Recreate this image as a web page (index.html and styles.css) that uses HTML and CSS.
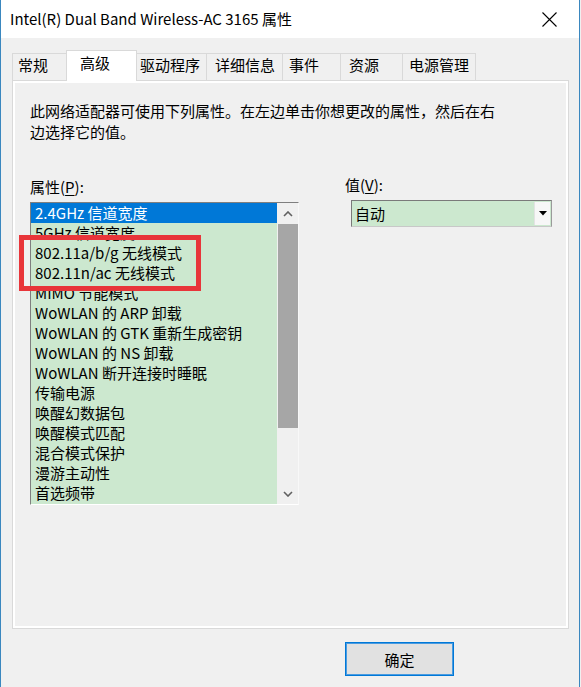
FILE: index.html
```html
<!DOCTYPE html>
<html lang="zh-CN">
<head>
<meta charset="utf-8">
<title>属性</title>
<link rel="stylesheet" href="styles.css">
</head>
<body>
<div class="window">
  <div class="titlebar">
    <span class="title">Intel(R) Dual Band Wireless-AC 3165 属性</span>
    <svg class="close" width="15" height="15" viewBox="0 0 15 15"><path d="M0.5 0.5 L14.5 14.5 M14.5 0.5 L0.5 14.5" stroke="#000" stroke-width="1.1" fill="none"/></svg>
  </div>
  <div class="main">
    <div class="tabs">
      <div class="tab t-general">常规</div>
      <div class="tab active t-adv">高级</div>
      <div class="tab t-driver">驱动程序</div>
      <div class="tab t-detail">详细信息</div>
      <div class="tab t-event">事件</div>
      <div class="tab t-res">资源</div>
      <div class="tab t-power">电源管理</div>
    </div>
    <div class="panel">
      <p class="desc">此网络适配器可使用下列属性。在左边单击你想更改的属性，然后在右边选择它的值。</p>
      <div class="cols">
        <div class="col-left">
          <div class="label">属性(<u>P</u>):</div>
          <div class="listbox">
            <div class="rows">
              <div class="row selected">2.4GHz 信道宽度</div>
              <div class="row">5GHz 信道宽度</div>
              <div class="row">802.11a/b/g 无线模式</div>
              <div class="row">802.11n/ac 无线模式</div>
              <div class="row">MIMO 节能模式</div>
              <div class="row">WoWLAN 的 ARP 卸载</div>
              <div class="row">WoWLAN 的 GTK 重新生成密钥</div>
              <div class="row">WoWLAN 的 NS 卸载</div>
              <div class="row">WoWLAN 断开连接时睡眠</div>
              <div class="row">传输电源</div>
              <div class="row">唤醒幻数据包</div>
              <div class="row">唤醒模式匹配</div>
              <div class="row">混合模式保护</div>
              <div class="row">漫游主动性</div>
              <div class="row">首选频带</div>
            </div>
            <div class="scrollbar">
              <div class="sb-btn"><svg width="10" height="6" viewBox="0 0 10 6"><path d="M1 5 L5 1 L9 5" stroke="#606060" stroke-width="1.6" fill="none"/></svg></div>
              <div class="sb-thumb"></div>
              <div class="sb-track"></div>
              <div class="sb-btn"><svg width="10" height="6" viewBox="0 0 10 6"><path d="M1 1 L5 5 L9 1" stroke="#606060" stroke-width="1.6" fill="none"/></svg></div>
            </div>
          </div>
        </div>
        <div class="col-right">
          <div class="label">值(<u>V</u>):</div>
          <div class="combo">
            <span class="combo-text">自动</span>
            <span class="combo-btn"><svg width="8" height="5" viewBox="0 0 8 5"><path d="M0 0 L8 0 L4 4.5 Z" fill="#000"/></svg></span>
          </div>
        </div>
      </div>
    </div>
    <div class="footer">
      <button class="btn">确定</button>
    </div>
  </div>
  <div class="highlight"></div>
</div>
</body>
</html>
```

FILE: styles.css
```css
* { box-sizing: border-box; }
html, body {
  margin: 0;
  padding: 0;
  background: #f0f0f0;
}
body {
  width: 581px;
  height: 687px;
  overflow: hidden;
  font-family: "Noto Sans CJK SC", "Noto Sans", sans-serif;
  font-size: 15px;
  color: #000;
}
.window {
  position: relative;
  width: 580px;
  height: 687px;
  border-left: 1px solid #3a87bf;
  border-right: 1px solid #3a87bf;
  background: #f0f0f0;
}
.titlebar {
  height: 38px;
  background: #fff;
  display: flex;
  align-items: center;
  justify-content: space-between;
  padding: 0 22px 0 9px;
}
.title {
  font-size: 15px;
  line-height: 20px;
}
.close { display: block; }
.main {
  padding: 12px 0 0 11px;
}
.tabs {
  display: flex;
  align-items: flex-end;
  height: 30px;
  position: relative;
  z-index: 2;
}
.tab {
  height: 27px;
  border: 1px solid #d9d9d9;
  border-bottom: 0;
  background: #f0f0f0;
  margin-right: -1px;
  line-height: 22px;
  white-space: nowrap;
}
.tab.active {
  height: 31px;
  background: #fff;
  margin-left: -2px;
  margin-right: -3px;
  margin-bottom: -1px;
  line-height: 24px;
  position: relative;
  z-index: 3;
}
.t-general { width: 57px; padding-left: 5px; }
.t-adv { width: 71px; padding-left: 13px; }
.t-driver { width: 73px; padding-left: 5px; }
.t-detail { width: 77px; padding-left: 8px; }
.t-event { width: 59px; padding-left: 6px; }
.t-res { width: 63px; padding-left: 8px; }
.t-power { width: 74px; padding-left: 6px; }
.panel {
  width: 557px;
  height: 549px;
  border: 1px solid #d9d9d9;
  box-shadow: inset 0 0 0 2px #fff;
  background: #f0f0f0;
  padding: 19px 0 0 17px;
  position: relative;
  z-index: 1;
}
.desc {
  margin: 0;
  width: 472px;
  line-height: 21px;
}
.cols {
  display: flex;
  margin-top: 35px;
}
.col-left { width: 269px; }
.col-right { margin-left: 46px; }
.label {
  line-height: 20px;
  height: 20px;
}
.label u { text-underline-offset: 2px; }
.col-right .label { margin-top: -2px; margin-bottom: 2px; }
.listbox {
  margin-top: 5px;
  width: 269px;
  height: 303px;
  display: flex;
  border: 1px solid;
  border-color: #7f7f7f #f8f8f8 #ffffff #7f7f7f;
  background: #cce8cf;
}
.rows {
  flex: 1;
  overflow: hidden;
}
.row {
  height: 20px;
  line-height: 20px;
  padding-left: 4px;
  white-space: nowrap;
}
.row.selected {
  background: #0078d7;
  color: #fff;
}
.scrollbar {
  width: 21px;
  display: flex;
  flex-direction: column;
  background: #f0f0f0;
}
.sb-btn {
  height: 21px;
  display: flex;
  align-items: center;
  justify-content: center;
}
.sb-thumb {
  height: 204px;
  background: #a6a6a6;
  margin-left: 1px;
}
.sb-track { flex: 1; }
.combo {
  margin-top: 5px;
  margin-left: 6px;
  width: 201px;
  height: 27px;
  display: flex;
  align-items: stretch;
  border: 1px solid;
  border-color: #7a7a7a #9a9a9a #c8c8c8 #7a7a7a;
  background: #cce8cf;
}
.combo-text {
  flex: 1;
  line-height: 25px;
  padding-left: 3px;
}
.combo-btn {
  width: 16px;
  margin: 1px 1px 1px 0;
  background: #f7f7f7;
  border-left: 1px solid #e3e3e3;
  display: flex;
  align-items: center;
  justify-content: center;
}
.footer {
  display: flex;
  justify-content: flex-end;
  padding-right: 125px;
  margin-top: 13px;
}
.btn {
  width: 109px;
  height: 34px;
  border: 1px solid #0078d7;
  box-shadow: inset 0 0 0 1px #4a9be0;
  background: #e1e1e1;
  font-family: inherit;
  font-size: 15px;
  color: #000;
  padding: 0;
}
.highlight {
  position: absolute;
  left: 18px;
  top: 235px;
  width: 182px;
  height: 56px;
  border: 5px solid #e8353a;
  z-index: 5;
}
```
